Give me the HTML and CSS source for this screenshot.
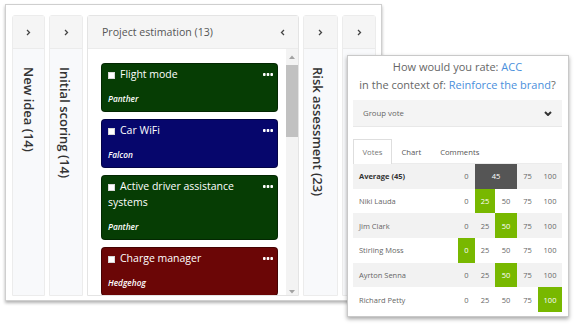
FILE: index.html
```html
<!DOCTYPE html>
<html>
<head>
<meta charset="utf-8">
<link rel="stylesheet" href="styles.css">
</head>
<body>
<div class="board">
  <div class="col collapsed c1">
    <div class="col-head"><svg class="chev" width="5" height="7" viewBox="0 0 5 7"><polyline points="1,1 3.5,3.5 1,6" /></svg></div>
    <div class="col-body"><span class="vtitle">New idea (14)</span></div>
  </div>
  <div class="col collapsed c2">
    <div class="col-head"><svg class="chev" width="5" height="7" viewBox="0 0 5 7"><polyline points="1,1 3.5,3.5 1,6" /></svg></div>
    <div class="col-body"><span class="vtitle">Initial scoring (14)</span></div>
  </div>
  <div class="col open c3">
    <div class="col-head"><span class="col-title">Project estimation (13)</span><svg class="chev" width="5" height="7" viewBox="0 0 5 7"><polyline points="4,1 1.5,3.5 4,6" /></svg></div>
    <div class="col-body open-body">
      <div class="cards">
        <div class="card green">
          <div class="card-title"><span class="cb"></span>Flight mode</div>
          <div class="card-sub">Panther</div>
          <svg class="dots" width="10" height="3" viewBox="0 0 10 3"><rect x="0" y="0" width="2.6" height="3" rx="0.8"/><rect x="3.7" y="0" width="2.6" height="3" rx="0.8"/><rect x="7.4" y="0" width="2.6" height="3" rx="0.8"/></svg>
        </div>
        <div class="card navy">
          <div class="card-title"><span class="cb"></span>Car WiFi</div>
          <div class="card-sub">Falcon</div>
          <svg class="dots" width="10" height="3" viewBox="0 0 10 3"><rect x="0" y="0" width="2.6" height="3" rx="0.8"/><rect x="3.7" y="0" width="2.6" height="3" rx="0.8"/><rect x="7.4" y="0" width="2.6" height="3" rx="0.8"/></svg>
        </div>
        <div class="card green">
          <div class="card-title"><span class="cb"></span>Active driver assistance systems</div>
          <div class="card-sub">Panther</div>
          <svg class="dots" width="10" height="3" viewBox="0 0 10 3"><rect x="0" y="0" width="2.6" height="3" rx="0.8"/><rect x="3.7" y="0" width="2.6" height="3" rx="0.8"/><rect x="7.4" y="0" width="2.6" height="3" rx="0.8"/></svg>
        </div>
        <div class="card red">
          <div class="card-title"><span class="cb"></span>Charge manager</div>
          <div class="card-sub">Hedgehog</div>
          <svg class="dots" width="10" height="3" viewBox="0 0 10 3"><rect x="0" y="0" width="2.6" height="3" rx="0.8"/><rect x="3.7" y="0" width="2.6" height="3" rx="0.8"/><rect x="7.4" y="0" width="2.6" height="3" rx="0.8"/></svg>
        </div>
      </div>
      <div class="scrollbar">
        <div class="sb-btn up"><svg width="6" height="4" viewBox="0 0 6 4"><polygon points="0,4 3,0.5 6,4"/></svg></div>
        <div class="sb-thumb"></div>
        <div class="sb-track"></div>
        <div class="sb-btn down"><svg width="6" height="4" viewBox="0 0 6 4"><polygon points="0,0 3,3.5 6,0"/></svg></div>
      </div>
    </div>
  </div>
  <div class="col collapsed c4">
    <div class="col-head"><svg class="chev" width="5" height="7" viewBox="0 0 5 7"><polyline points="1,1 3.5,3.5 1,6" /></svg></div>
    <div class="col-body"><span class="vtitle">Risk assessment (23)</span></div>
  </div>
  <div class="col collapsed c5">
    <div class="col-head"><svg class="chev" width="5" height="7" viewBox="0 0 5 7"><polyline points="1,1 3.5,3.5 1,6" /></svg></div>
    <div class="col-body"></div>
  </div>
</div>

<div class="panel">
  <div class="question">
    <div>How would you rate: <span class="link">ACC</span></div>
    <div>in the context of: <span class="link">Reinforce the brand</span>?</div>
  </div>
  <div class="select">
    <span>Group vote</span>
    <svg width="8" height="5" viewBox="0 0 8 5"><polyline points="1,1 4,4 7,1"/></svg>
  </div>
  <div class="tabs">
    <span class="tab active">Votes</span>
    <span class="tab">Chart</span>
    <span class="tab">Comments</span>
  </div>
  <div class="votes">
    <div class="row alt head"><span class="name">Average (45)</span><span>0</span><span class="avg">45</span><span>75</span><span>100</span></div>
    <div class="row"><span class="name">Niki Lauda</span><span>0</span><span class="sel">25</span><span>50</span><span>75</span><span>100</span></div>
    <div class="row alt"><span class="name">Jim Clark</span><span>0</span><span>25</span><span class="sel">50</span><span>75</span><span>100</span></div>
    <div class="row"><span class="name">Stirling Moss</span><span class="sel">0</span><span>25</span><span>50</span><span>75</span><span>100</span></div>
    <div class="row alt"><span class="name">Ayrton Senna</span><span>0</span><span>25</span><span class="sel">50</span><span>75</span><span>100</span></div>
    <div class="row"><span class="name">Richard Petty</span><span>0</span><span>25</span><span>50</span><span>75</span><span class="sel">100</span></div>
  </div>
</div>
</body>
</html>
```

FILE: styles.css
```css
* { box-sizing: border-box; }
html, body { margin: 0; padding: 0; }
body {
  width: 574px;
  height: 324px;
  overflow: hidden;
  background: #fff;
  font-family: "Open Sans", "Noto Sans", sans-serif;
  position: relative;
}

/* ---------- board window ---------- */
.board {
  position: absolute;
  left: 5px;
  top: 4px;
  width: 377px;
  height: 297px;
  border: 1px solid #cfcfcf;
  box-shadow: 0 2px 3px rgba(0, 0, 0, 0.3);
  background: #fff;
  display: flex;
  gap: 4px;
  padding: 10px 5px 4px 6px;
}
.col {
  display: flex;
  flex-direction: column;
  border: 1px solid #ececec;
  border-radius: 3px 3px 0 0;
  background: #f8f9fb;
  flex: none;
}
.c1 { width: 33px; }
.c2 { width: 34px; }
.c3 { width: 212px; background: #fff; border-color: #e4e4e4; }
.c4 { width: 35px; }
.c5 { width: 34px; }

.col-head {
  height: 33px;
  flex: none;
  background: #f5f5f5;
  border-bottom: 1px solid #ebebeb;
  display: flex;
  align-items: center;
  justify-content: center;
}
.chev polyline { fill: none; stroke: #444; stroke-width: 1.3; }
.c3 .col-head {
  justify-content: space-between;
  padding: 0 13px 0 14px;
}
.col-title { font-size: 10.6px; color: #555; }

.col-body {
  flex: 1;
  min-height: 0;
  display: flex;
  justify-content: center;
  align-items: flex-start;
}
.vtitle {
  writing-mode: vertical-rl;
  font-size: 13px;
  font-weight: 600;
  color: #333;
  margin-top: 18px;
  white-space: nowrap;
}
.c2 .vtitle { margin-left: -3px; }
.c4 .vtitle { margin-left: -5px; }

/* open column */
.open-body {
  justify-content: flex-start;
  align-items: stretch;
  padding-left: 13px;
  gap: 8px;
  background: #fff;
  overflow: hidden;
}
.cards {
  width: 177px;
  flex: none;
  display: flex;
  flex-direction: column;
  gap: 7px;
  padding-top: 14px;
}
.card {
  position: relative;
  flex: none;
  border-radius: 4px;
  border: 1px solid rgba(0, 0, 0, 0.35);
  padding: 2px 20px 6px 6px;
  color: #fff;
}
.green { background: #063d04; }
.navy { background: #06066c; }
.red { background: #6b0606; }
.card-title {
  font-size: 10.5px;
  line-height: 16px;
}
.cb {
  display: inline-block;
  width: 7px;
  height: 7px;
  background: #fff;
  border: 1px solid #d8d8d8;
  margin-right: 5px;
  vertical-align: -0.5px;
}
.card-sub {
  font-size: 8.3px;
  font-style: italic;
  font-weight: 600;
  line-height: 12px;
  margin-top: 11px;
}
.dots {
  position: absolute;
  right: 4px;
  top: 9px;
  fill: #fff;
}

.scrollbar {
  width: 12px;
  flex: none;
  display: flex;
  flex-direction: column;
  background: #f3f3f3;
}
.sb-btn {
  flex: none;
  display: flex;
  align-items: center;
  justify-content: center;
}
.sb-btn svg { fill: #a3a3a3; }
.sb-btn.up { height: 16px; }
.sb-btn.down { height: 8px; align-items: flex-end; padding-bottom: 1px; }
.sb-thumb { height: 72px; background: #c1c1c1; flex: none; }
.sb-track { flex: 1; }

/* ---------- rating panel ---------- */
.panel {
  position: absolute;
  left: 347px;
  top: 55px;
  width: 222px;
  height: 262px;
  background: #fff;
  border: 1px solid #c9c9c9;
  box-shadow: 0 2px 4px rgba(0, 0, 0, 0.35);
  padding: 2px 6px 0 5px;
}
.question {
  text-align: center;
  font-size: 11px;
  line-height: 18px;
  color: #666;
}
.link { color: #4a8fdc; }
.select {
  margin-top: 6px;
  height: 27px;
  background: #f4f4f4;
  border-bottom: 1px solid #e8e8e8;
  display: flex;
  align-items: center;
  justify-content: space-between;
  padding: 0 10px;
  font-size: 7.8px;
  color: #666;
}
.select polyline { fill: none; stroke: #333; stroke-width: 2; }
.tabs {
  margin-top: 12px;
  height: 25px;
  display: flex;
  border-bottom: 1px solid #ececec;
  font-size: 7.7px;
  color: #555;
}
.tab {
  display: flex;
  align-items: center;
  padding: 0 8.5px;
  border: 1px solid transparent;
  border-bottom: none;
}
.tab.active {
  border-color: #dedede;
  background: #fff;
  color: #777;
  margin-bottom: -1px;
}
.votes {
  font-size: 7.5px;
  color: #666;
}
.row {
  display: grid;
  grid-template-columns: 105px 17px 20px 22px 21px 24px;
  height: 24.67px;
}
.row.alt { background: #f2f2f2; }
.row > span {
  display: flex;
  align-items: center;
  justify-content: center;
}
.row > .name {
  justify-content: flex-start;
  padding-left: 6px;
}
.row.head .name { font-weight: 700; color: #333; }
.sel { background: #78b800; color: #fff; }
.avg { grid-column: span 2; background: #555; color: #fff; }
```
